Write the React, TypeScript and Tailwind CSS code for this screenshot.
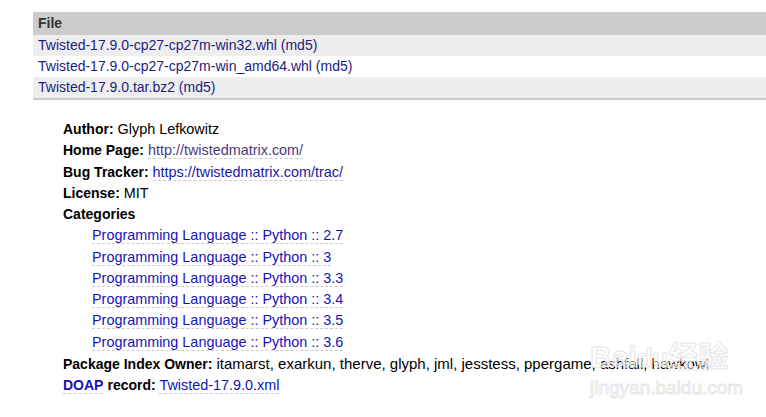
const files = [
  'Twisted-17.9.0-cp27-cp27m-win32.whl',
  'Twisted-17.9.0-cp27-cp27m-win_amd64.whl',
  'Twisted-17.9.0.tar.bz2',
];

const categories = ['2.7', '3', '3.3', '3.4', '3.5', '3.6'];

export default function App() {
  return (
    <div className="relative min-h-screen bg-white pt-3 font-['Liberation_Sans',Arial,sans-serif] text-[14.4px] text-black">
      <table className="ml-[33px] w-[733px] border-b-2 border-[#ccc] text-left">
        <thead>
          <tr className="bg-[#ccc]">
            <th className="h-[23px] px-[5px] text-[14px] font-bold text-[#333]">File</th>
          </tr>
        </thead>
        <tbody>
          {files.map((f, i) => (
            <tr key={f} className={i % 2 === 0 ? 'bg-[#eee]' : 'bg-white'}>
              <td className="h-[21px] px-[5px] text-[14px] leading-[21px] text-[#1c1c80]">
                {f} (md5)
              </td>
            </tr>
          ))}
        </tbody>
      </table>

      <div className="mt-[19px] pl-[63px] leading-[21.25px] [&_b]:text-[14px]">
        <div>
          <b>Author:</b> Glyph Lefkowitz
        </div>
        <div>
          <b>Home Page:</b>{' '}
          <span className="border-b border-dashed border-[#ccc] text-[#4a3a7e]">http://twistedmatrix.com/</span>
        </div>
        <div>
          <b>Bug Tracker:</b>{' '}
          <span className="border-b border-dashed border-[#ccc] text-[#1818a8]">https://twistedmatrix.com/trac/</span>
        </div>
        <div>
          <b>License:</b> MIT
        </div>
        <div>
          <b>Categories</b>
        </div>
        <ul className="pl-[29px]">
          {categories.map((v) => (
            <li key={v}>
              <span className="border-b border-dashed border-[#ccc] text-[#1414b8]">
                Programming Language :: Python :: {v}
              </span>
            </li>
          ))}
        </ul>
        <div>
          <b>Package Index Owner:</b>{' '}
          <span className="text-[15px]">itamarst, exarkun, therve, glyph, jml, jesstess, ppergame, ashfall, hawkowl</span>
        </div>
        <div>
          <b className="border-b border-dashed border-[#ccc] text-[#1414b8]">DOAP</b> <b>record:</b>{' '}
          <span className="border-b border-dashed border-[#ccc] text-[#1414b8]">Twisted-17.9.0.xml</span>
        </div>
      </div>

      <div className="pointer-events-none absolute left-[590px] top-[342px] flex flex-col items-start leading-none">
        <span className="font-['Liberation_Sans','Noto_Sans_CJK_SC',sans-serif] text-[30px] font-bold text-white/50 [-webkit-text-stroke:1px_#e6e6e6]">
          Bai<span className="text-[26px]">du</span>经验
        </span>
        <span className="mt-[6px] text-[19px] text-white/50 [-webkit-text-stroke:1px_#e6e6e6]">jingyan.baidu.com</span>
      </div>
    </div>
  );
}
